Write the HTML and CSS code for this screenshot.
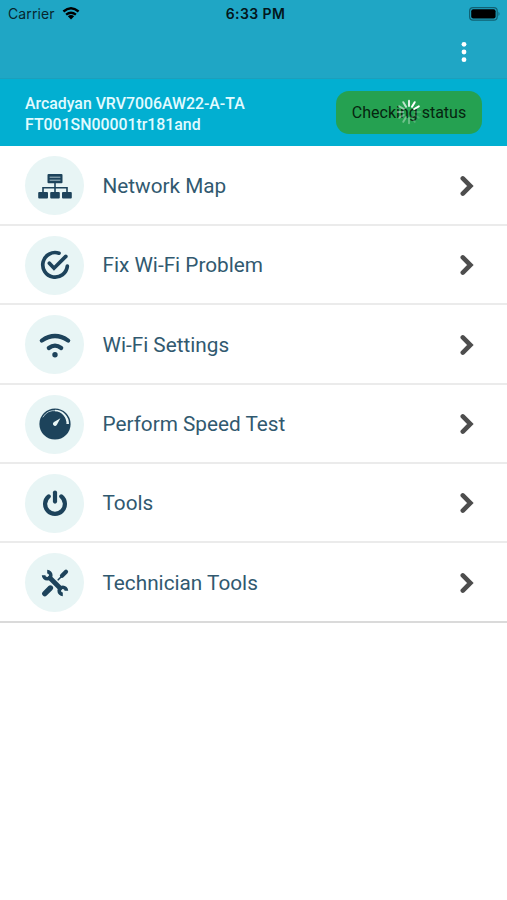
FILE: index.html
```html
<!DOCTYPE html>
<html lang="en">

<head>
  <meta charset="UTF-8">
  <meta name="viewport" content="width=device-width, initial-scale=1.0">
  <title>Home</title>
  <link rel="stylesheet" href="styles.css">
</head>

<body>
  <div class="header">
    <div class="status-bar">
      <div class="carrier">
        <span>Carrier</span>
        <svg class="signal" viewBox="0 0 18 13">
          <path d="M1.4 4.5 Q9 -2 16.6 4.5" />
          <path d="M4.1 7.6 Q9 3.7 13.9 7.6" />
          <path class="fill" d="M5.8 9.3 Q9 6.9 12.2 9.3 L9 12.6 Z" />
        </svg>
      </div>
      <div class="time">6:33 PM</div>
      <svg class="battery" viewBox="0 0 32 14">
        <rect class="shell" x=".6" y=".6" width="27.6" height="12.6" rx="3.4" />
        <rect x="2.2" y="2.2" width="24.4" height="9.4" rx="2" />
        <path class="cap" d="M29.5 4.8 Q31.5 6.9 29.5 9 Z" />
      </svg>
    </div>
    <div class="toolbar">
      <svg class="more" viewBox="0 0 6 22">
        <circle cx="3" cy="3.3" r="2.4" />
        <circle cx="3" cy="11" r="2.4" />
        <circle cx="3" cy="18.7" r="2.4" />
      </svg>
    </div>
  </div>

  <div class="device">
    <div class="device-name">Arcadyan VRV7006AW22-A-TA<br>FT001SN00001tr181and</div>
    <div class="status-btn">
      <span>Checking status</span>
      <svg class="spinner" viewBox="-13 -13 26 26">
        <path opacity=".85" d="M0 -6V-11.3" />
        <path opacity="1" d="M3 -5.2L5.7 -9.8" />
        <path opacity="1" d="M5.2 -3L9.8 -5.7" />
        <path opacity=".15" d="M6 0H11.3" />
        <path opacity=".15" d="M5.2 3L9.8 5.7" />
        <path opacity=".2" d="M3 5.2L5.7 9.8" />
        <path opacity=".3" d="M0 6V11.3" />
        <path opacity=".35" d="M-3 5.2L-5.7 9.8" />
        <path opacity=".35" d="M-5.2 3L-9.8 5.7" />
        <path opacity=".4" d="M-6 0H-11.3" />
        <path opacity=".5" d="M-5.2 -3L-9.8 -5.7" />
        <path opacity=".7" d="M-3 -5.2L-5.7 -9.8" />
      </svg>
    </div>
  </div>

  <ul class="menu">
    <li>
      <div class="icon">
        <svg viewBox="-18 -18 36 36">
          <rect x="-7.5" y="-12" width="15" height="9.3" rx="1" />
          <path class="light" d="M-5 -8.8H5M-5 -5.8H5" />
          <path class="thin" d="M0 -3V7M-12 7V1.8H12V7" />
          <rect x="-16.8" y="6" width="9.8" height="6.6" rx="1" />
          <rect x="-4.8" y="6" width="9.6" height="6.6" rx="1" />
          <rect x="7" y="6" width="9.8" height="6.6" rx="1" />
        </svg>
      </div>
      <span class="label">Network Map</span>
      <svg class="arrow" viewBox="0 0 14 22"><path d="M2.8 3.4L10.4 11L2.8 18.6" /></svg>
    </li>
    <li>
      <div class="icon">
        <svg viewBox="-18 -18 36 36">
          <path class="line" d="M4 -11.8A12.3 12.3 0 1 0 12.3 1.2" />
          <path class="line" d="M-5.6 -1.8L-1 3.2L10.8 -8.6" />
        </svg>
      </div>
      <span class="label">Fix Wi-Fi Problem</span>
      <svg class="arrow" viewBox="0 0 14 22"><path d="M2.8 3.4L10.4 11L2.8 18.6" /></svg>
    </li>
    <li>
      <div class="icon">
        <svg viewBox="-18 -18 36 36">
          <path class="wave" d="M-13.2 -4.4Q0 -13.6 13.2 -4.4" />
          <path class="wave" d="M-6.2 3Q0 -1.8 6.2 3" />
          <circle cx="0" cy="9.8" r="2.7" />
        </svg>
      </div>
      <span class="label">Wi-Fi Settings</span>
      <svg class="arrow" viewBox="0 0 14 22"><path d="M2.8 3.4L10.4 11L2.8 18.6" /></svg>
    </li>
    <li>
      <div class="icon">
        <svg viewBox="-18 -18 36 36">
          <circle cx="0" cy="0" r="15.6" />
          <path class="light" d="M-12 -7A13.5 13.5 0 0 1 1 -13.4" />
          <path class="white" d="M0 -14.2A14 14 0 0 1 14 0H11.4A12 12 0 0 0 0 -12.8Z" />
          <path class="white" d="M5.4 -5.8L1.9 .8A2.1 2.1 0 1 1 -1 -2Z" />
        </svg>
      </div>
      <span class="label">Perform Speed Test</span>
      <svg class="arrow" viewBox="0 0 14 22"><path d="M2.8 3.4L10.4 11L2.8 18.6" /></svg>
    </li>
    <li>
      <div class="icon">
        <svg viewBox="-18 -18 36 36">
          <path class="wave" d="M-6.3 -6.6A9.9 9.9 0 1 0 6.3 -6.6" />
          <path class="wave" d="M0 -10.4V-1.4" />
        </svg>
      </div>
      <span class="label">Tools</span>
      <svg class="arrow" viewBox="0 0 14 22"><path d="M2.8 3.4L10.4 11L2.8 18.6" /></svg>
    </li>
    <li>
      <div class="icon">
        <svg viewBox="-18 -18 36 36">
          <path class="thin" d="M3.2 -3.2L8 -8" />
          <path class="wave" d="M7 -7.2L11 -11.2" />
          <path class="grip" d="M-10.2 10.6L-4.6 5" />
          <path class="shaft" d="M-5 -5L5 5" />
          <path class="jaw" d="M-11.4 -7.8A3.6 3.6 0 1 0 -7.8 -11.4" />
          <path class="jaw" d="M11.4 7.8A3.6 3.6 0 1 0 7.8 11.4" />
        </svg>
      </div>
      <span class="label">Technician Tools</span>
      <svg class="arrow" viewBox="0 0 14 22"><path d="M2.8 3.4L10.4 11L2.8 18.6" /></svg>
    </li>
  </ul>
</body>

</html>
```

FILE: styles.css
```css
* {
  margin: 0;
  padding: 0;
  box-sizing: border-box;
}

body {
  background-color: #fff;
  font-family: Roboto, "Liberation Sans", sans-serif;
}

ul {
  list-style: none;
}

svg {
  display: block;
}

.header {
  height: 79px;
  background-color: #1fa6c5;
  border-bottom: 1px solid #1c9fbc;
}

.status-bar {
  display: grid;
  grid-template-columns: 1fr auto 1fr;
  align-items: center;
  height: 27px;
  padding: 0 6px 0 8px;
  font-family: Inter, "Liberation Sans", sans-serif;
  font-size: 14px;
  color: #07262e;
}

.carrier {
  display: flex;
  align-items: center;
  gap: 7px;
  letter-spacing: .1px;
}

.signal {
  width: 18px;
  height: 13px;
  fill: none;
  stroke: #000;
  stroke-width: 2.4;
}

.signal .fill {
  fill: #000;
  stroke: none;
}

.time {
  padding-left: 2px;
  font-weight: 600;
  letter-spacing: .4px;
  color: #03161b;
}

.battery {
  width: 32px;
  height: 14px;
  justify-self: end;
}

.battery .shell {
  fill: none;
  stroke: #116173;
  stroke-width: 1.2;
}

.battery .cap {
  fill: #116173;
}

.toolbar {
  display: flex;
  justify-content: flex-end;
  padding: 14px 40px 0 0;
}

.more {
  width: 6px;
  height: 22px;
  fill: #fff;
}

.device {
  display: flex;
  justify-content: space-between;
  align-items: center;
  height: 67.4px;
  padding: 0 25px;
  background-color: #02afd1;
}

.device-name {
  padding-top: 3px;
  font-size: 15.85px;
  font-weight: 500;
  line-height: 21px;
  color: #e2fbff;
}

.status-btn {
  position: relative;
  width: 146px;
  height: 43px;
  line-height: 43px;
  text-align: center;
  font-size: 16px;
  color: #06250f;
  background-color: #25a151;
  border-radius: 13px;
}

/* spinner lies over the button text */
.spinner {
  position: absolute;
  top: 8px;
  left: 60px;
  width: 26px;
  height: 26px;
  fill: none;
  stroke: #fff;
  stroke-width: 2;
  stroke-linecap: round;
}

.menu li {
  display: flex;
  align-items: center;
  height: 79.4px;
  padding: 1.6px 33px 0 25.4px;
  border-bottom: 2px solid #ebebeb;
}

.menu li:last-child {
  height: 80px;
  padding-top: 1px;
  border-bottom-color: #dadada;
}

.icon {
  display: flex;
  align-items: center;
  justify-content: center;
  width: 59px;
  height: 59px;
  border-radius: 50%;
  background-color: #e8f5f5;
}

.icon svg {
  width: 36px;
  height: 36px;
  fill: #1d435b;
}

.icon path {
  fill: none;
  stroke: #1d435b;
  stroke-linecap: round;
}

.icon .line {
  stroke-width: 3.7;
}

.icon .wave {
  stroke-width: 4.2;
}

.icon .shaft {
  stroke-width: 4.8;
}

.icon .thin {
  stroke-width: 1.6;
}

.icon .grip {
  stroke-width: 5.4;
}

.icon .jaw {
  stroke-width: 3.6;
  stroke-linecap: butt;
}

.icon .light {
  stroke: #a9c0c9;
  stroke-width: 1;
}

.icon .white {
  fill: #e8f5f5;
  stroke: none;
}

.label {
  flex: 1;
  margin-left: 18.1px;
  font-size: 20.75px;
  color: #31596f;
}

.arrow {
  width: 14px;
  height: 22px;
  fill: none;
  stroke: #4d4d4d;
  stroke-width: 4.6;
  stroke-linecap: round;
}
```
